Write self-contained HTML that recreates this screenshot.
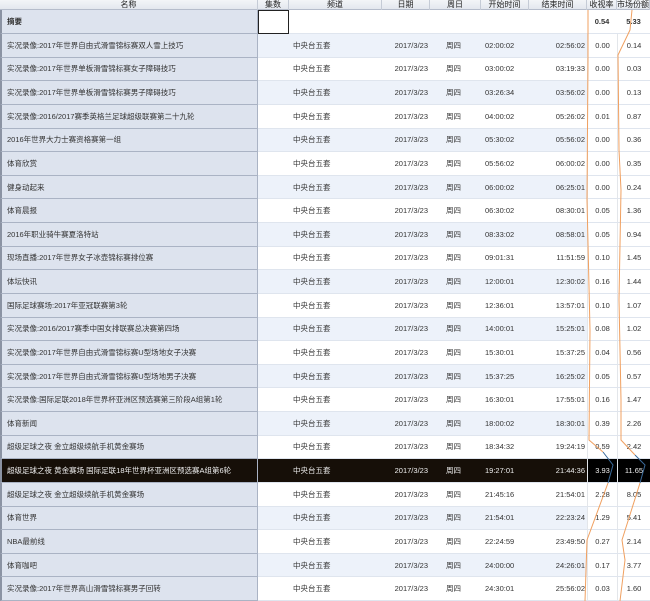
<!DOCTYPE html>
<html><head><meta charset="utf-8"><style>
*{margin:0;padding:0;box-sizing:border-box}
body{width:650px;height:601px;overflow:hidden;background:#fff;font-family:"Liberation Sans","Noto Sans CJK SC",sans-serif;font-size:7.5px;color:#333;position:relative}
.hd{position:absolute;top:0;left:0;width:650px;height:10px;background:linear-gradient(#f3f5f8,#e3e7ee);border-bottom:1px solid #b5bccb;display:flex}
.hd div{height:10px;line-height:10px;text-align:center;border-right:1px solid #c5cbd6;font-size:8px;color:#222}
.row{position:absolute;left:0;width:650px;display:flex}
.row div{height:100%;display:flex;align-items:center;white-space:nowrap;overflow:hidden;border-bottom:1px solid #dfe5ee}
.c0{width:258px;padding-left:5px;background:#dde3ee;border-right:1px solid #aab3c4;border-left:2px solid #8b93a3}
.c1{width:31px}.c2{width:93px;padding-left:4px}.c3{width:48px;justify-content:flex-end;padding-right:2px}.c4{width:51px;padding-left:16px}.c5{width:48px;padding-left:4px}.c6{width:58px;justify-content:flex-end;padding-right:2px}.c7{width:30px;justify-content:center;background:#fff;border-left:1px solid #e3e6ea}.c8{width:33px;justify-content:center;background:#fff;border-left:1px solid #e3e6ea}
.row div.c0{border-bottom:1px solid #aab3c4}
.b .c1,.b .c2,.b .c3,.b .c4,.b .c5,.b .c6{background:#edf2fa}
.hl div{background:#160f08!important;color:#eee}
.hl .c7,.hl .c8{background:#000!important}
</style></head><body>
<div class="hd"><div style="width:258px">名称</div><div style="width:31px">集数</div><div style="width:93px">频道</div><div style="width:48px">日期</div><div style="width:51px">周日</div><div style="width:48px">开始时间</div><div style="width:58px">结束时间</div><div style="width:30px">收视率</div><div style="width:33px">市场份额</div></div>
<div class="row" style="top:10px;height:24px"><div class="c0" style="font-weight:bold">摘要</div><div class="c1" style="border:1px solid #222;background:#fff"></div><div style="width:298px;background:#fff"></div><div class="c7" style="font-weight:bold;border-left:none">0.54</div><div class="c8" style="font-weight:bold;border-left:none">5.33</div></div>
<div id="rows"></div>
<svg style="position:absolute;left:0;top:0" width="650" height="601"><polyline fill="none" stroke="#f0a060" stroke-width="1" points="588,10 588,60 587,200 590,330 589,440 603,452"/><polyline fill="none" stroke="#3a6a9a" stroke-width="1" points="603,452 613,465 608,483"/><polyline fill="none" stroke="#f0a060" stroke-width="1" points="608,483 587,540 585,601"/><polyline fill="none" stroke="#f0a060" stroke-width="1" points="632,10 630,30 618,55 619,150 621,190 619,300 621,400 621,440 635,455"/><polyline fill="none" stroke="#3a6a9a" stroke-width="1" points="635,455 645,465 640,483"/><polyline fill="none" stroke="#f0a060" stroke-width="1" points="640,483 622,540 625,560 620,601"/></svg>
<script>
var d=[["实况录像:2017年世界自由式滑雪锦标赛双人雪上技巧","02:00:02","02:56:02","0.00","0.14"],
["实况录像:2017年世界单板滑雪锦标赛女子障碍技巧","03:00:02","03:19:33","0.00","0.03"],
["实况录像:2017年世界单板滑雪锦标赛男子障碍技巧","03:26:34","03:56:02","0.00","0.13"],
["实况录像:2016/2017赛季英格兰足球超级联赛第二十九轮","04:00:02","05:26:02","0.01","0.87"],
["2016年世界大力士赛资格赛第一组","05:30:02","05:56:02","0.00","0.36"],
["体育欣赏","05:56:02","06:00:02","0.00","0.35"],
["健身动起来","06:00:02","06:25:01","0.00","0.24"],
["体育晨报","06:30:02","08:30:01","0.05","1.36"],
["2016年职业骑牛赛夏洛特站","08:33:02","08:58:01","0.05","0.94"],
["现场直播:2017年世界女子冰壶锦标赛排位赛","09:01:31","11:51:59","0.10","1.45"],
["体坛快讯","12:00:01","12:30:02","0.16","1.44"],
["国际足球赛场:2017年亚冠联赛第3轮","12:36:01","13:57:01","0.10","1.07"],
["实况录像:2016/2017赛季中国女排联赛总决赛第四场","14:00:01","15:25:01","0.08","1.02"],
["实况录像:2017年世界自由式滑雪锦标赛U型场地女子决赛","15:30:01","15:37:25","0.04","0.56"],
["实况录像:2017年世界自由式滑雪锦标赛U型场地男子决赛","15:37:25","16:25:02","0.05","0.57"],
["实况录像:国际足联2018年世界杯亚洲区预选赛第三阶段A组第1轮","16:30:01","17:55:01","0.16","1.47"],
["体育新闻","18:00:02","18:30:01","0.39","2.26"],
["超级足球之夜 金立超级续航手机黄金赛场","18:34:32","19:24:19","0.59","2.42"],
["超级足球之夜 黄金赛场 国际足联18年世界杯亚洲区预选赛A组第6轮","19:27:01","21:44:36","3.93","11.65"],
["超级足球之夜 金立超级续航手机黄金赛场","21:45:16","21:54:01","2.28","8.05"],
["体育世界","21:54:01","22:23:24","1.29","5.41"],
["NBA最前线","22:24:59","23:49:50","0.27","2.14"],
["体育咖吧","24:00:00","24:26:01","0.17","3.77"],
["实况录像:2017年世界高山滑雪锦标赛男子回转","24:30:01","25:56:02","0.03","1.60"]];
var h="",rh=(601-34)/24;
d.forEach(function(r,i){var cls="row"+(i%2==0?" b":"")+(i==18?" hl":"");
h+='<div class="'+cls+'" style="top:'+(34+i*rh)+'px;height:'+rh+'px"><div class="c0">'+r[0]+'</div><div class="c1"></div><div class="c2">中央台五套</div><div class="c3">2017/3/23</div><div class="c4">周四</div><div class="c5">'+r[1]+'</div><div class="c6">'+r[2]+'</div><div class="c7">'+r[3]+'</div><div class="c8">'+r[4]+'</div></div>';});
document.getElementById("rows").innerHTML=h;
</script>
</body></html>
